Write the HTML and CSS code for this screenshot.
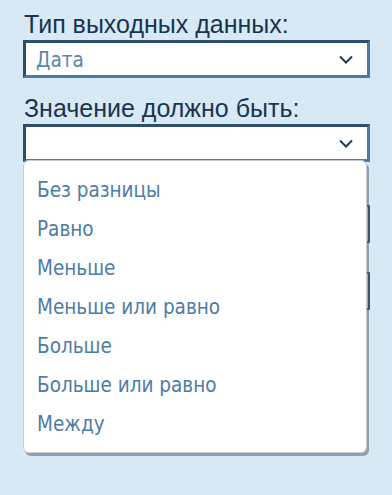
FILE: index.html
```html
<!DOCTYPE html>
<html lang="ru">
<head>
    <meta charset="UTF-8">
    <meta name="viewport" content="width=device-width, initial-scale=1.0">
    <title>Фильтр</title>
    <link rel="stylesheet" href="styles.css">
</head>
<body>
    <div class="form">
        <!-- Output type -->
        <div class="field">
            <label class="field-label">Тип выходных данных:</label>
            <div class="select">
                <span class="select-value">Дата</span>
                <svg class="chevron" width="14" height="9" viewBox="0 0 14 9"><path d="M1 1.5 L7 7.5 L13 1.5" fill="none" stroke="#1d3b5c" stroke-width="2"/></svg>
            </div>
        </div>

        <!-- Comparison -->
        <div class="field field-open">
            <label class="field-label">Значение должно быть:</label>
            <div class="select">
                <span class="select-value"></span>
                <svg class="chevron" width="14" height="9" viewBox="0 0 14 9"><path d="M1 1.5 L7 7.5 L13 1.5" fill="none" stroke="#1d3b5c" stroke-width="2"/></svg>
            </div>

            <ul class="dropdown">
                <li>Без разницы</li>
                <li>Равно</li>
                <li>Меньше</li>
                <li>Меньше или равно</li>
                <li>Больше</li>
                <li>Больше или равно</li>
                <li>Между</li>
            </ul>
        </div>

        <!-- Value inputs (under the open list) -->
        <div class="input-box first"></div>
        <div class="input-box"></div>
    </div>
</body>
</html>
```

FILE: styles.css
```css
/* Reset */
body, html {
    margin: 0;
    padding: 0;
    width: 100%;
    height: 100%;
    background: #d6e9f5;
    font-family: "Liberation Sans", Arial, sans-serif;
}

.form {
    width: 347px;
    padding: 11px 0 0 23px;
}

.field {
    position: relative;
    margin-bottom: 17px;
}

.field-label {
    display: block;
    font-family: "Liberation Sans", Arial, sans-serif;
    font-size: 25px;
    line-height: 26px;
    color: #1a3450;
    padding-left: 1px;
}

/* Select box */
.select {
    box-sizing: border-box;
    height: 38px;
    margin-top: 3px;
    background: #fff;
    border: 3px solid #4b7aa3;
    border-top-color: #2f4d68;
    border-left-color: #2f4d68;
    display: flex;
    align-items: center;
    justify-content: space-between;
    padding: 1px 14px 0 10px;
}

.select-value {
    font-family: "DejaVu Sans Condensed", "DejaVu Sans", Tahoma, sans-serif;
    font-size: 20.5px;
    color: #5a86ae;
}

.chevron {
    display: block;
}

/* Open list */
.dropdown {
    position: absolute;
    top: 65px;
    left: 0;
    z-index: 10;
    width: 344px;
    box-sizing: border-box;
    margin: 0;
    padding: 10px 0 8px;
    list-style: none;
    background: #fff;
    border: 1px solid #c9ccd6;
    border-radius: 6px;
    box-shadow: 2px 3px 0 rgba(60, 70, 80, 0.45);
}

.dropdown li {
    height: 39px;
    line-height: 39px;
    padding-left: 13px;
    font-family: "DejaVu Sans Condensed", "DejaVu Sans", Tahoma, sans-serif;
    font-size: 20.5px;
    color: #4d7ca6;
}

/* Inputs hidden below the list */
.input-box {
    box-sizing: border-box;
    height: 38px;
    background: #fff;
    border: 2px solid #4b7aa3;
    border-right-color: #3a5873;
    margin-bottom: 29px;
}

.input-box.first {
    margin-top: 43px;
}
```
